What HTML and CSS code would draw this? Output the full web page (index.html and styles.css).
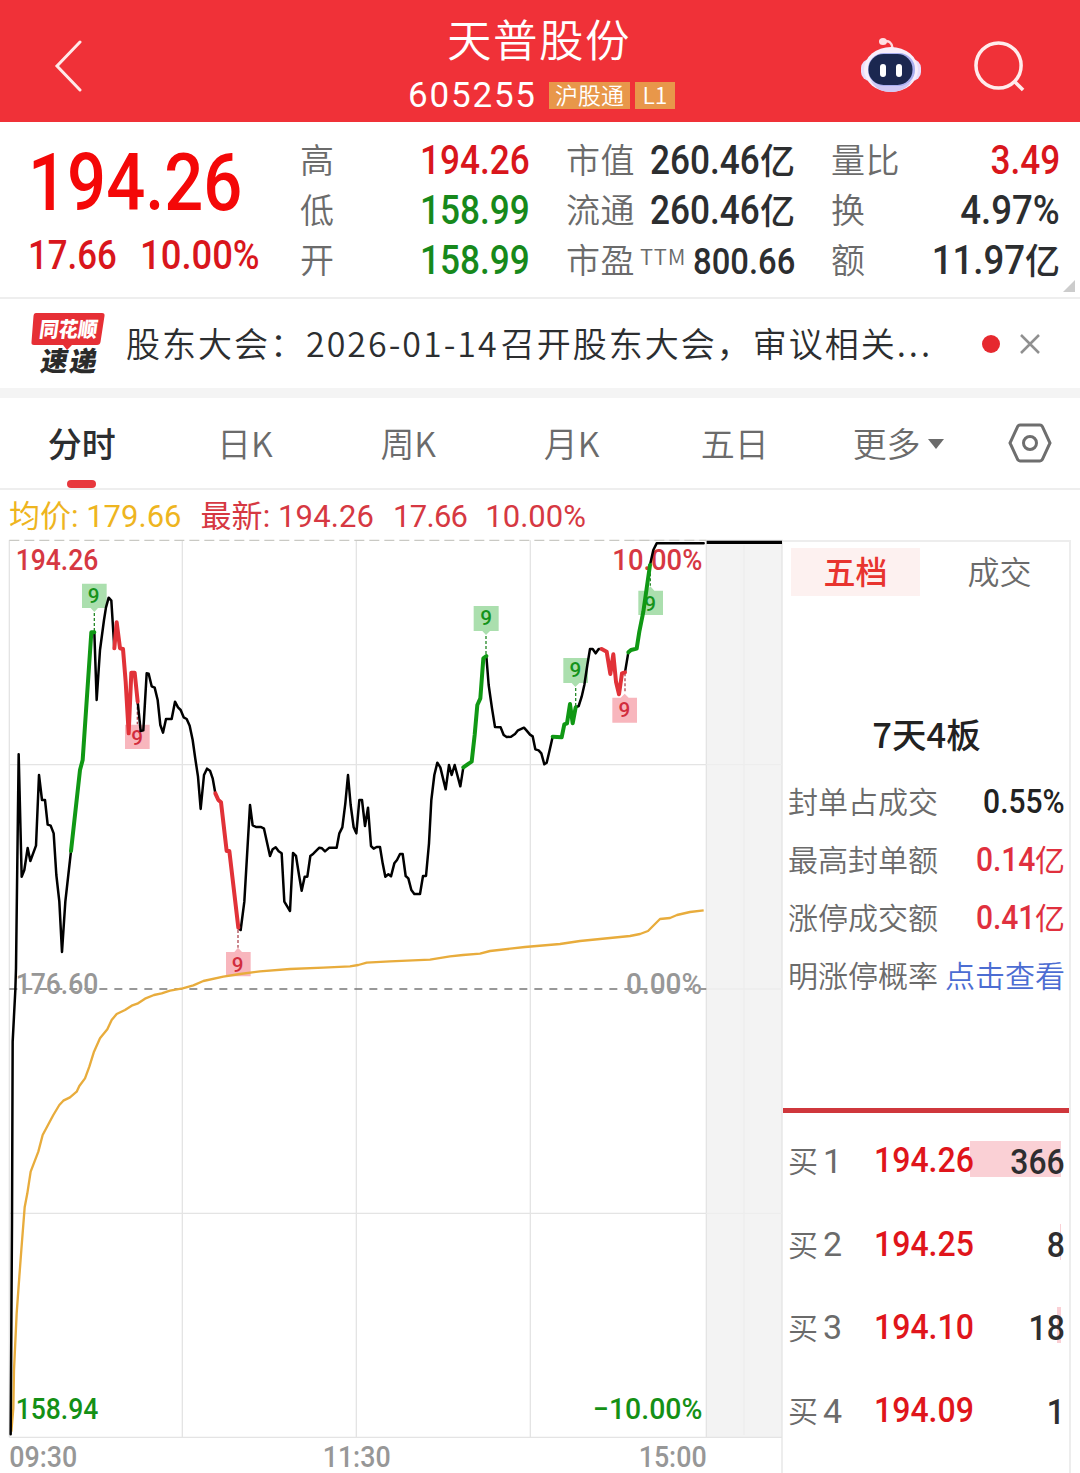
FILE: index.html
```html
<!DOCTYPE html>
<html lang="zh-CN">
<head>
<meta charset="utf-8">
<title>天普股份 605255</title>
<link rel="stylesheet" href="styles.css">
</head>
<body>
<div class="app">
  <header class="header">
    <svg class="back" viewBox="0 0 30 52"><path d="M26 2 3 26l23 24"/></svg>
    <div class="heading">
      <h1 class="title">天普股份</h1>
      <div class="subtitle"><span class="code">605255</span><span class="badge">沪股通</span><span class="badge badge-level">L1</span></div>
    </div>
    <svg class="robot" viewBox="0 0 62 58">
      <path d="M24 6c5-2 8 1 8.500 6" fill="none" stroke="#ffd9de" stroke-width="2.500"/>
      <ellipse cx="23" cy="5.500" rx="4" ry="3.500" fill="#ffdfe3"/>
      <rect x="1" y="23" width="60" height="22" rx="9" fill="#e9defc"/>
      <ellipse cx="31" cy="33.500" rx="27" ry="22.500" fill="#f8eefb"/>
      <path d="M10 43c4 9 11 13 21 13s18-5 22-13c-3 5-10 7-22 7s-17-2-21-7z" fill="#cfc8f4"/>
      <rect x="8" y="17" width="47" height="33" rx="16" fill="#a9aef0"/>
      <rect x="8.500" y="18" width="44" height="31" rx="15" fill="#1b2750"/>
      <rect x="20" y="28" width="6" height="13" rx="3" fill="#fff"/>
      <rect x="36" y="28" width="6" height="13" rx="3" fill="#fff"/>
    </svg>
    <svg class="search" viewBox="0 0 54 54"><circle cx="25" cy="26" r="23"/><path d="m41 42 9 9"/></svg>
  </header>

  <section class="quote">
    <div class="price-block">
      <div class="price"><span class="num">194.26</span></div>
      <div class="change"><span class="num">17.66</span><span class="num percent">10.00%</span></div>
    </div>
    <dl class="facts">
      <div class="fact"><dt>高</dt><dd class="up"><span class="num">194.26</span></dd></div>
      <div class="fact"><dt>低</dt><dd class="down"><span class="num">158.99</span></dd></div>
      <div class="fact"><dt>开</dt><dd class="down"><span class="num">158.99</span></dd></div>
    </dl>
    <dl class="facts">
      <div class="fact"><dt>市值</dt><dd><span class="num">260.46</span>亿</dd></div>
      <div class="fact"><dt>流通</dt><dd><span class="num">260.46</span>亿</dd></div>
      <div class="fact"><dt class="pe-label">市盈<span class="ttm">TTM</span></dt><dd class="pe"><span class="num">800.66</span></dd></div>
    </dl>
    <dl class="facts">
      <div class="fact"><dt>量比</dt><dd class="up"><span class="num">3.49</span></dd></div>
      <div class="fact"><dt>换</dt><dd><span class="num turnover">4.97%</span></dd></div>
      <div class="fact"><dt>额</dt><dd><span class="num turnover">11.97</span>亿</dd></div>
    </dl>
    <i class="corner"></i>
  </section>

  <section class="news">
    <svg class="news-logo" viewBox="0 0 76 80">
      <path d="M6 9h66q3 0 2.500 3l-4 26q-.5 3-3.500 3H42l-5 5-4-5H4q-3 0-2.500-3l2-26q.3-3 2.500-3z" fill="#e62f35"/>
      <text transform="translate(8.500 33) skewX(-8)" textLength="58" lengthAdjust="spacingAndGlyphs" class="logo-top">同花顺</text>
      <text transform="translate(9.500 67) skewX(-10)" class="logo-bottom">速</text>
      <text transform="translate(38.500 67) skewX(-10)" class="logo-bottom">递</text>
    </svg>
    <p class="news-text">股东大会：<span class="date">2026-01-14</span>召开股东大会，审议相关<span class="dots">...</span></p>
    <i class="dot"></i>
    <svg class="close" viewBox="0 0 20 20"><path d="m1 1 18 18M19 1 1 19"/></svg>
  </section>

  <nav class="tabs">
    <a class="tab active">分时</a>
    <a class="tab">日K</a>
    <a class="tab">周K</a>
    <a class="tab">月K</a>
    <a class="tab">五日</a>
    <a class="tab">更多<i class="caret"></i></a>
    <svg class="settings" viewBox="0 0 44 40"><path d="M12 2h20q1.500 0 2.300 1.400L42 20l-7.700 16.600Q33.500 38 32 38H12q-1.500 0-2.300-1.400L2 20 9.700 3.400Q10.500 2 12 2z"/><circle cx="22" cy="20" r="6.500"/></svg>
  </nav>

  <div class="legend"><span class="average">均价: 179.66</span><span class="latest">最新: 194.26</span><span class="delta">17.66</span><span>10.00%</span></div>

  <main class="board">
    <!-- Plot units: three per CSS pixel -->
    <svg class="chart" viewBox="0 0 2349 2814">
      <rect x="2119" y="16" width="227" height="2692" fill="#f3f3f3"/>
      <g class="grid">
        <path d="M28 16V2707M547 16V2707M1069 16V2707M1591 16V2707M2119 16V2707M2346 16V2814"/>
        <path d="M28 689H2119M28 2035H2119M28 2707H2346M1900 16H2349"/>
      </g>
      <path class="grid-faint" d="M2232 30V2700M2119 689H2346M2119 1362H2346M2119 2035H2346"/>
      <path class="limit-line" d="M28 16H2119"/>
      <path class="mid-line" d="M28 1362H2119"/>

      <g class="axis">
        <text class="rise" x="47" y="104" textLength="248" lengthAdjust="spacingAndGlyphs">194.26</text>
        <text class="rise" x="1837" y="104" textLength="270" lengthAdjust="spacingAndGlyphs">10.00%</text>
        <text class="flat" x="47" y="1378" textLength="248" lengthAdjust="spacingAndGlyphs">176.60</text>
        <text class="flat" x="1878" y="1378" textLength="228" lengthAdjust="spacingAndGlyphs">0.00%</text>
        <text class="fall" x="47" y="2651" textLength="248" lengthAdjust="spacingAndGlyphs">158.94</text>
        <text class="fall" x="1779" y="2651" textLength="328" lengthAdjust="spacingAndGlyphs">−10.00%</text>
        <text class="flat" x="28" y="2795" textLength="204" lengthAdjust="spacingAndGlyphs">09:30</text>
        <text class="flat" x="968" y="2795" textLength="204" lengthAdjust="spacingAndGlyphs">11:30</text>
        <text class="flat" x="1916" y="2795" textLength="204" lengthAdjust="spacingAndGlyphs">15:00</text>
      </g>

      <g class="flag sell">
        <path d="M246 146h74v73h-26l-11 12-11-12h-26zM1421 213h75v75h-26l-12 12-11-12h-26zM1690 369h74v75h-26l-12 12-11-12h-25zM1915 167h24l12-13 12 13h26v73h-74z"/>
        <path class="stem" d="M283 234v58M1458 303v60M1727 459v58M1951 100v52"/>
        <text x="281" y="203">9</text><text x="1458" y="271">9</text><text x="1726" y="427">9</text><text x="1950" y="227">9</text>
      </g>
      <g class="flag buy">
        <path d="M375 569h74v73h-74zM678 1251h25l11-13 12 13h26v73h-74zM1837 488h25l12-12 12 12h25v75h-74z"/>
        <path class="stem" d="M412 500v68M714 1185v53M1875 415v60"/>
        <text x="411" y="629">9</text><text x="713" y="1310">9</text><text x="1873" y="547">9</text>
      </g>

      <polyline class="avg" points="34,2690 37,2655 40,2620 42,2505 50,2335 58,2225 64,2145 74,2017 82,1975 92,1910 115,1850 128,1800 160,1740 178,1710 190,1697 210,1687 230,1670 238,1653 255,1630 268,1595 282,1550 300,1510 322,1483 335,1455 350,1437 375,1425 395,1412 412,1406 435,1391 462,1380 485,1375 510,1367 548,1360 580,1351 610,1338 670,1325 720,1317 780,1309 870,1302 970,1298 1050,1294 1075,1290 1100,1283 1170,1279 1290,1274 1350,1264 1389,1260 1440,1256 1470,1248 1575,1236 1680,1227 1740,1218 1800,1212 1890,1203 1920,1197 1944,1188 1962,1170 1980,1152 2010,1149 2031,1140 2070,1131 2111,1126"/>
      <g class="trend">
        <polyline points="32,2698 36,2065 38,1520 46,1365 48,1300 56,658 65,1025 73,1005 83,939 91,978 108,932 117,720 126,795 135,795 143,869 152,872 161,895 169,1020 178,1100 186,1251 196,1100 213,948"/>
        <polyline points="283,292 290,495 300,345 312,255 318,217 326,188 334,197 343,340"/>
        <polyline points="413,500 422,588 430,586 440,415 446,416 455,454 464,458 473,495 481,570 489,593 498,552 515,552 525,500 534,517 542,525 551,547 560,552 569,572 578,615 586,672 594,725 602,822 612,720 621,701 630,707 638,730 646,775"/>
        <polyline points="715,1178 722,1185 733,1100 750,810 758,871 768,876 783,876 792,881 810,963 818,943 827,937 836,949 845,955 853,1100 862,1115 870,1128 879,954 888,963 897,1020 905,1067 914,1025 922,1025 931,963 940,956 958,938 966,940 975,949 988,938 1010,938 1018,895 1027,877 1036,805 1044,720 1052,810 1061,877 1069,895 1078,795 1086,795 1095,873 1104,818 1113,933 1121,941 1130,936 1140,936 1148,985 1156,1025 1165,1018 1173,1024 1183,985 1191,975 1200,957 1208,957 1217,1023 1225,1030 1234,1065 1243,1077 1260,1077 1269,1023 1278,1023 1287,925 1294,795 1303,720 1312,683 1321,697 1337,763 1347,690 1355,720 1364,690 1381,754 1390,697"/>
        <polyline points="1459,363 1466,450 1476,520 1485,576 1502,577 1511,600 1520,606 1533,605 1545,597 1554,586 1572,578 1580,587 1590,599 1598,604 1606,643 1616,646 1624,655 1633,688 1640,683 1649,645 1658,605"/>
        <polyline points="1727,517 1736,513 1745,485 1753,450 1762,390 1770,342 1778,342 1787,355 1796,342 1805,342"/>
        <polyline points="1875,412 1885,352"/>
        <polyline points="1950,90 1960,45 1970,25 2111,25"/>
      </g>
      <path class="closing" d="M2120 22H2346"/>
      <g class="trend trend-green">
        <polyline points="213,948 240,705 248,675 274,292 283,292"/>
        <polyline points="1390,697 1407,685 1415,680 1424,600 1432,510 1441,490 1450,370 1459,363"/>
        <polyline points="1658,605 1685,607 1693,568 1701,565 1710,507 1718,565 1727,517"/>
        <polyline points="1885,352 1893,345 1910,341 1918,290 1930,230 1950,90"/>
      </g>
      <g class="trend trend-red">
        <polyline points="343,340 350,262 360,340 369,342 377,440 386,595 394,413 404,413 413,500"/>
        <polyline points="646,775 655,795 663,802 680,948 688,948 715,1178"/>
        <polyline points="1805,342 1820,350 1831,417 1840,358 1848,440 1857,478 1866,415 1875,412"/>
      </g>
    </svg>

    <aside class="panel">
      <div class="panel-tabs"><a class="panel-tab on">五档</a><a class="panel-tab">成交</a></div>
      <div class="streak">7天4板</div>
      <ul class="stats">
        <li><span>封单占成交</span><b class="dark"><span class="num">0.55%</span></b></li>
        <li><span>最高封单额</span><b><span class="num">0.14</span>亿</b></li>
        <li><span>涨停成交额</span><b><span class="num">0.41</span>亿</b></li>
        <li><span>明涨停概率</span><a class="link">点击查看</a></li>
      </ul>
      <ul class="orders">
        <li><span class="level">买<em>1</em></span><span class="num bid">194.26</span><span class="qty"><i class="bar" style="width:91px"></i><span class="num">366</span></span></li>
        <li><span class="level">买<em>2</em></span><span class="num bid">194.25</span><span class="qty"><i class="bar" style="width:1px"></i><span class="num">8</span></span></li>
        <li><span class="level">买<em>3</em></span><span class="num bid">194.10</span><span class="qty"><i class="bar" style="width:4px"></i><span class="num">18</span></span></li>
        <li><span class="level">买<em>4</em></span><span class="num bid">194.09</span><span class="qty"><span class="num">1</span></span></li>
      </ul>
    </aside>
  </main>
</div>
</body>
</html>
```
FILE: styles.css
```css
* { box-sizing: border-box; }
body, h1, p, dl, dd, ul { margin: 0; padding: 0; }
li { list-style: none; }
i, em { font-style: normal; }

body {
  background: #fff;
  color: #2c2e30;
  font-family: "Noto Sans CJK SC", sans-serif;
  font-weight: 350;
}
.app { width: 1080px; height: 1473px; overflow: hidden; }

/* DIN-like figures */
.num {
  display: inline-block;
  font-family: Roboto, sans-serif;
  font-weight: 500;
  transform: scaleX(.88);
  transform-origin: right center;
}

.header {
  display: grid;
  grid-template-columns: 400px 460px 62px 1fr;
  align-items: start;
  height: 122px;
  padding-right: 53px;
  background: #f03138;
  color: #fff;
}
.back { width: 30px; height: 52px; margin: 40px 0 0 54px; fill: none; stroke: #ffe9e9; stroke-width: 3; stroke-linecap: round; }
.heading { width: 284px; }
.title { height: 76px; padding-left: 47px; font-size: 44.500px; line-height: 76px; font-weight: 350; letter-spacing: 1.500px; }
.subtitle { display: flex; align-items: center; height: 40px; padding-left: 8px; }
.code { width: 141px; font: 400 35px/40px Roboto, sans-serif; letter-spacing: 1.800px; }
.badge { width: 81px; height: 27px; margin-bottom: 1px; background: #e8974a; font-size: 23px; line-height: 25px; text-align: center; }
.badge-level { width: 40px; margin-left: 5px; }
.robot { width: 62px; height: 58px; margin-top: 36px; justify-self: end; }
.search { width: 53px; height: 53px; margin-top: 40px; justify-self: end; fill: none; stroke: #ffecec; stroke-width: 3.600; }

.quote {
  position: relative;
  display: grid;
  grid-template-columns: 236px 230px 229px 229px;
  column-gap: 36px;
  height: 177px;
  padding: 13px 0 0 28px;
  border-bottom: 2px solid #eee;
}
.price { height: 98px; color: #f40808; font-size: 79px; line-height: 82px; }
.price .num { transform: scaleX(.87); transform-origin: left center; }
.change { display: flex; height: 46px; color: #d9161c; font-size: 40px; line-height: 46px; }
.change .num { width: 112px; transform: scaleX(.87); transform-origin: left center; }
.change .percent { transform: scaleX(.91); }
.fact { display: flex; justify-content: space-between; height: 50px; font-size: 34px; line-height: 47px; white-space: nowrap; }
.fact dt { color: #6b6b6b; letter-spacing: .5px; }
.fact dd { font-size: 35px; font-weight: 500; }
.fact .num { font-size: 40px; line-height: 47px; }
.fact .turnover { transform: scaleX(.915); }
.fact .pe-label { margin-right: -14px; }
.fact .pe .num { font-size: 36px; transform: scaleX(.91); line-height: 48px; }
.fact .up { color: #d9161c; }
.fact .down { color: #17891b; }
.ttm { margin-left: 5px; font-size: 22px; letter-spacing: .8px; vertical-align: 8px; line-height: 1; }
.corner { position: absolute; right: 5px; bottom: 5px; border-left: 12px solid transparent; border-bottom: 12px solid #ccc; }

.news { display: flex; align-items: center; height: 99px; padding-left: 30px; border-bottom: 10px solid #f4f4f4; }
.news-logo { width: 76px; height: 80px; flex: none; }
.logo-top { fill: #fff; font-size: 21px; font-weight: 900; }
.logo-bottom { fill: #2b2b2b; font-size: 27px; font-weight: 900; }
.news-text { width: 854px; margin: -1px 0 0 20px; font-size: 34px; line-height: 60px; letter-spacing: 2px; white-space: nowrap; }
.date { margin: 0 2px 0 0; }
.dots { letter-spacing: 3px; }
.dot { width: 18px; height: 18px; margin-left: 2px; border-radius: 50%; background: #e6292f; }
.close { width: 20px; height: 20px; margin-left: 20px; fill: none; stroke: #909090; stroke-width: 2.500; }

.tabs { display: grid; grid-template-columns: repeat(6, 163.300px) 100px; align-items: center; height: 92px; border-bottom: 2px solid #eee; }
.tab { position: relative; height: 90px; text-align: center; font-size: 34px; line-height: 90px; color: #6b6b6b; }
.active { color: #2c2e30; font-weight: 500; }
.active::after { content: ""; position: absolute; left: 67px; bottom: 0; width: 29px; height: 8px; border-radius: 4px; background: #e8383d; }
.caret { display: inline-block; margin: 0 0 8px 7px; border: 8px solid transparent; border-top: 10px solid #6b6b6b; border-bottom: 0; }
.settings { width: 44px; height: 40px; justify-self: center; fill: none; stroke: #6e6e6e; stroke-width: 3; }

.legend { display: flex; height: 45px; padding-left: 9px; color: #d63842; font: 400 31px/53px Roboto, "Noto Sans CJK SC", sans-serif; white-space: pre; }
.legend span { margin-right: 19px; }
.legend .average { color: #eeb51f; }
.legend .latest { letter-spacing: .1px; }
.legend .delta { margin-right: 18px; letter-spacing: -.7px; }

.board { display: flex; height: 938px; }
.chart { width: 783px; height: 938px; flex: none; }
.grid { fill: none; stroke: #e4e4e4; stroke-width: 4; }
.grid-faint { fill: none; stroke: #ededed; stroke-width: 4; }
.limit-line { stroke: #c9c9c4; stroke-width: 4; stroke-dasharray: 30 15; }
.mid-line { stroke: #777; stroke-width: 4; stroke-dasharray: 24 21; }
.axis { font: 500 87px Roboto, sans-serif; }
.rise { fill: #d63842; }
.fall { fill: #149016; }
.flat { fill: #979797; }
.flag text { font: 500 62px Roboto, sans-serif; text-anchor: middle; }
.sell { fill: #abdfae; }
.sell text { fill: #15931b; }
.buy { fill: #f8b6bd; }
.buy text { fill: #d22d3d; }
.stem { fill: none; stroke-width: 4; stroke-dasharray: 9 6; stroke: #288a2b; }
.buy .stem { stroke: #b04b55; }
.avg { fill: none; stroke: #e8ac3c; stroke-width: 7; stroke-linejoin: round; }
.trend { fill: none; stroke: #000; stroke-width: 7.500; stroke-linejoin: round; stroke-linecap: round; }
.trend-green { stroke: #109814; stroke-width: 12; }
.trend-red { stroke: #e13238; stroke-width: 12; }
.closing { stroke: #000; stroke-width: 10; }

.panel { width: 288px; margin-top: 5px; padding: 6px 4px 0 5px; border-top: 2px solid #ededed; border-right: 2px solid #ededed; }
.panel-tabs { display: flex; margin-left: 3px; }
.panel-tab { width: 129px; height: 48px; text-align: center; font-size: 32px; line-height: 44px; color: #6b6b6b; }
.panel-tab + .panel-tab { margin-left: 15px; }
.panel-tab.on { background: #fdf1f0; color: #e8342f; font-weight: 500; }
.streak { height: 177px; padding-top: 109px; font-size: 34.500px; line-height: 56px; text-align: center; font-weight: 500; color: #222; white-space: nowrap; }
.stats li { display: flex; justify-content: space-between; height: 58px; font-size: 30px; line-height: 54px; color: #6b6b6b; white-space: nowrap; }
.stats b { color: #e0303e; font-weight: 400; }
.stats .num { font-size: 33px; line-height: 54px; transform: scaleX(.91); }
.stats .dark { color: #222; }
.link { color: #4c6dd2; }
.orders { margin: 103px -4px 0 -5px; padding: 6px 4px 0 5px; border-top: 5px solid #cf373c; }
.orders li { display: grid; grid-template-columns: 86px 100px 1fr; align-items: center; height: 83.400px; }
.level { display: flex; align-items: center; margin-top: -3px; font-size: 30px; color: #6b6b6b; }
.level em { margin: 3px 0 0 5px; font: 400 34px Roboto, sans-serif; }
.bid { position: relative; z-index: 1; color: #e0151b; font-size: 35px; transform: scaleX(.915); transform-origin: left center; }
.qty { position: relative; text-align: right; font-size: 35px; line-height: 36px; color: #2e2e30; }
.qty .num { position: relative; transform: scaleX(.91); }
.bar { position: absolute; right: 4px; top: 0; height: 36px; background: #fad0d5; }
```
